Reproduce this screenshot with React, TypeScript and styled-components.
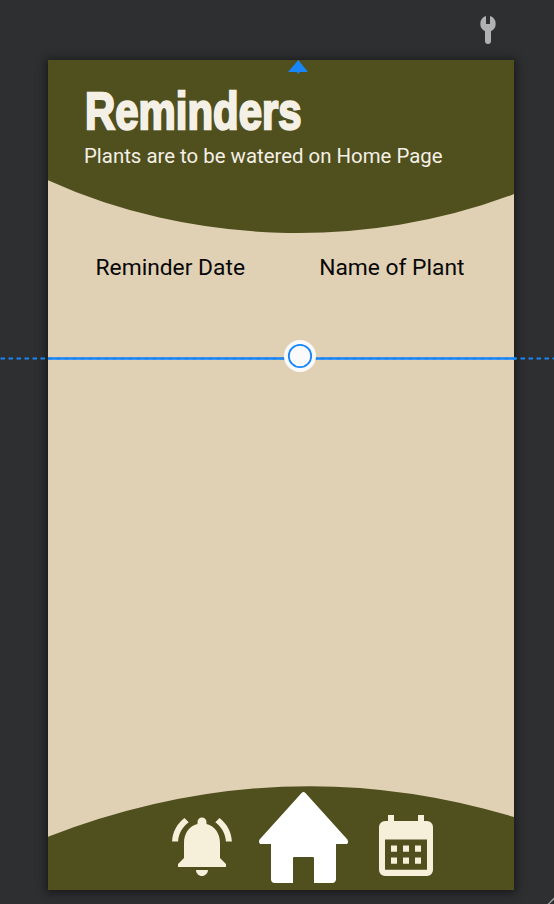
import React from "react";
import styled, { createGlobalStyle } from "styled-components";

const olive = "#504f1e";
const sand = "#e0d1b4";
const cream = "#f6efd9";
const blue = "#1886f7";

const GlobalStyle = createGlobalStyle`
  * { box-sizing: border-box; }
  body { margin: 0; background: #2e2f31; overflow: hidden; }
`;

const Canvas = styled.div`
  position: relative;
  width: 554px;
  height: 904px;
  overflow: hidden;
  background: #2e2f31;
  font-family: Roboto, sans-serif;
`;

const Toolbar = styled.div`
  display: flex;
  justify-content: flex-end;
  height: 60px;
  padding: 15px 56px 0 0;
`;

const Phone = styled.main`
  display: flex;
  flex-direction: column;
  width: 466px;
  height: 830px;
  margin-left: 48px;
  background: ${sand};
  box-shadow: 0 1px 8px 2px rgba(18, 19, 20, 0.75);
`;

const Header = styled.header`
  position: relative;
  height: 174px;
  padding: 23px 0 0 36px;
  color: #f5f0e6;
`;

const Curve = styled.svg`
  position: absolute;
  inset: 0;
  display: block;
`;

const Title = styled.h1`
  position: relative;
  margin: 0 0 0 0.8px;
  width: max-content;
  font-family: "Liberation Sans", Arial, sans-serif;
  font-size: 52.5px;
  line-height: 56px;
  font-weight: 700;
  -webkit-text-stroke: 2.3px #f5f0e6;
  transform: scaleX(0.798);
  transform-origin: left;
`;

const Subtitle = styled.p`
  position: relative;
  margin: 4px 0 0;
  width: max-content;
  font-size: 20.4px;
  line-height: 26px;
  white-space: nowrap;
`;

const Columns = styled.section`
  display: flex;
  flex: 1;
  align-items: flex-start;
  padding: 20px 49.5px 0 47.5px;
  justify-content: space-between;
`;

const ColumnLabel = styled.span`
  color: #070707;
  font-size: 22.8px;
  line-height: 28px;
  white-space: nowrap;
`;

const Nav = styled.nav`
  position: relative;
  display: flex;
  height: 104px;
  padding: 5px 0 0 118px;
`;

const NavIcon = styled.svg<{ $top?: number; $left?: number }>`
  position: relative;
  flex: none;
  display: block;
  margin: ${(p) => p.$top ?? 0}px 0 0 ${(p) => p.$left ?? 0}px;
`;

const Overlay = styled.svg`
  position: absolute;
  inset: 0;
  pointer-events: none;
`;

export default function App() {
  return (
    <Canvas>
      <GlobalStyle />
      <Toolbar>
        <svg width="20" height="30" viewBox="478 15 20 30" fill="#b0b1b3">
          <path d="M486 16v8h4v-8a8.2 8.2 0 0 1 1 15.2V41a3 3 0 0 1-6 0v-9.8A8.2 8.2 0 0 1 486 16z" />
        </svg>
      </Toolbar>
      <Phone>
        <Header>
          <Curve width="466" height="174" viewBox="0 0 466 174">
            <path d="M0 0H466V134A500 395 0 0 1 0 120.3Z" fill={olive} />
          </Curve>
          <Title>Reminders</Title>
          <Subtitle>Plants are to be watered on Home Page</Subtitle>
        </Header>
        <Columns>
          <ColumnLabel>Reminder Date</ColumnLabel>
          <ColumnLabel>Name of Plant</ColumnLabel>
        </Columns>
        <Nav>
          <Curve width="466" height="104" viewBox="0 786 466 104">
            <path d="M0 836.7Q233 746.7 466 817V890H0Z" fill={olive} />
          </Curve>
          <NavIcon $top={19} width="72" height="72" viewBox="0 0 24 24" fill={cream}>
            <path d="M7.58 4.08L6.15 2.65C3.75 4.48 2.17 7.3 2.03 10.5h2c.15-2.65 1.51-4.97 3.55-6.42zm12.39 6.42h2c-.15-3.2-1.73-6.02-4.12-7.85l-1.42 1.43c2.02 1.45 3.39 3.77 3.54 6.42zM18 11c0-3.07-1.64-5.64-4.5-6.32V4c0-.83-.67-1.5-1.5-1.5s-1.5.67-1.5 1.5v.68C7.63 5.36 6 7.92 6 11v5l-2 2v1h16v-1l-2-2v-5zm-6 11c.14 0 .27-.01.4-.04.65-.14 1.18-.58 1.44-1.18.1-.24.15-.5.15-.78h-4c.01 1.1.9 2 2.01 2z" />
          </NavIcon>
          <NavIcon $left={20} width="92" height="94" viewBox="258 791 92 94" fill="#fff">
            <path d="M301.8 792.8Q303.5 791.2 305.2 792.8L347.4 839.6Q349 842 347.2 844H336V879.5Q335.5 882.8 332.5 883H314V858.2Q314 857 312.8 857H294.2Q293 857 293 858.2V883H274.5Q271.3 882.7 271 879.5V844H260.2Q258 842 259.6 839.6Z" />
          </NavIcon>
          <NavIcon $top={23} $left={28} width="56" height="63" viewBox="378 814 56 63" fill={cream}>
            <path
              fillRule="evenodd"
              d="M388 815h6v6h24v-6h6v6h3a6 6 0 0 1 6 6v43a6 6 0 0 1-6 6H385a6 6 0 0 1-6-6V827a6 6 0 0 1 6-6h3zM385 839.4V869.7H427V839.4z"
            />
            <path d="M391 845.4h6v6.3h-6zm12 0h6v6.3h-6zm12 0h6v6.3h-6zM391 857.5h6v6.3h-6zm12 0h6v6.3h-6zm12 0h6v6.3h-6z" />
          </NavIcon>
        </Nav>
      </Phone>
      <Overlay width="554" height="904" viewBox="0 0 554 904">
        <path d="M298.3 60L308 72H299.3V73.5H297.3V72H288Z" fill={blue} />
        <path d="M0.5 358.5H554" stroke={blue} strokeWidth="2" strokeDasharray="4.5 3.5" />
        <path d="M48 358.5H516" stroke={blue} strokeWidth="2.4" />
        <circle cx="300" cy="356" r="16" fill="#fafafa" />
        <circle cx="300" cy="356" r="11.2" fill="none" stroke={blue} strokeWidth="1.8" />
        <path d="M548 904.5L554.5 898" stroke="#a2a3a5" strokeWidth="1.3" />
      </Overlay>
    </Canvas>
  );
}
